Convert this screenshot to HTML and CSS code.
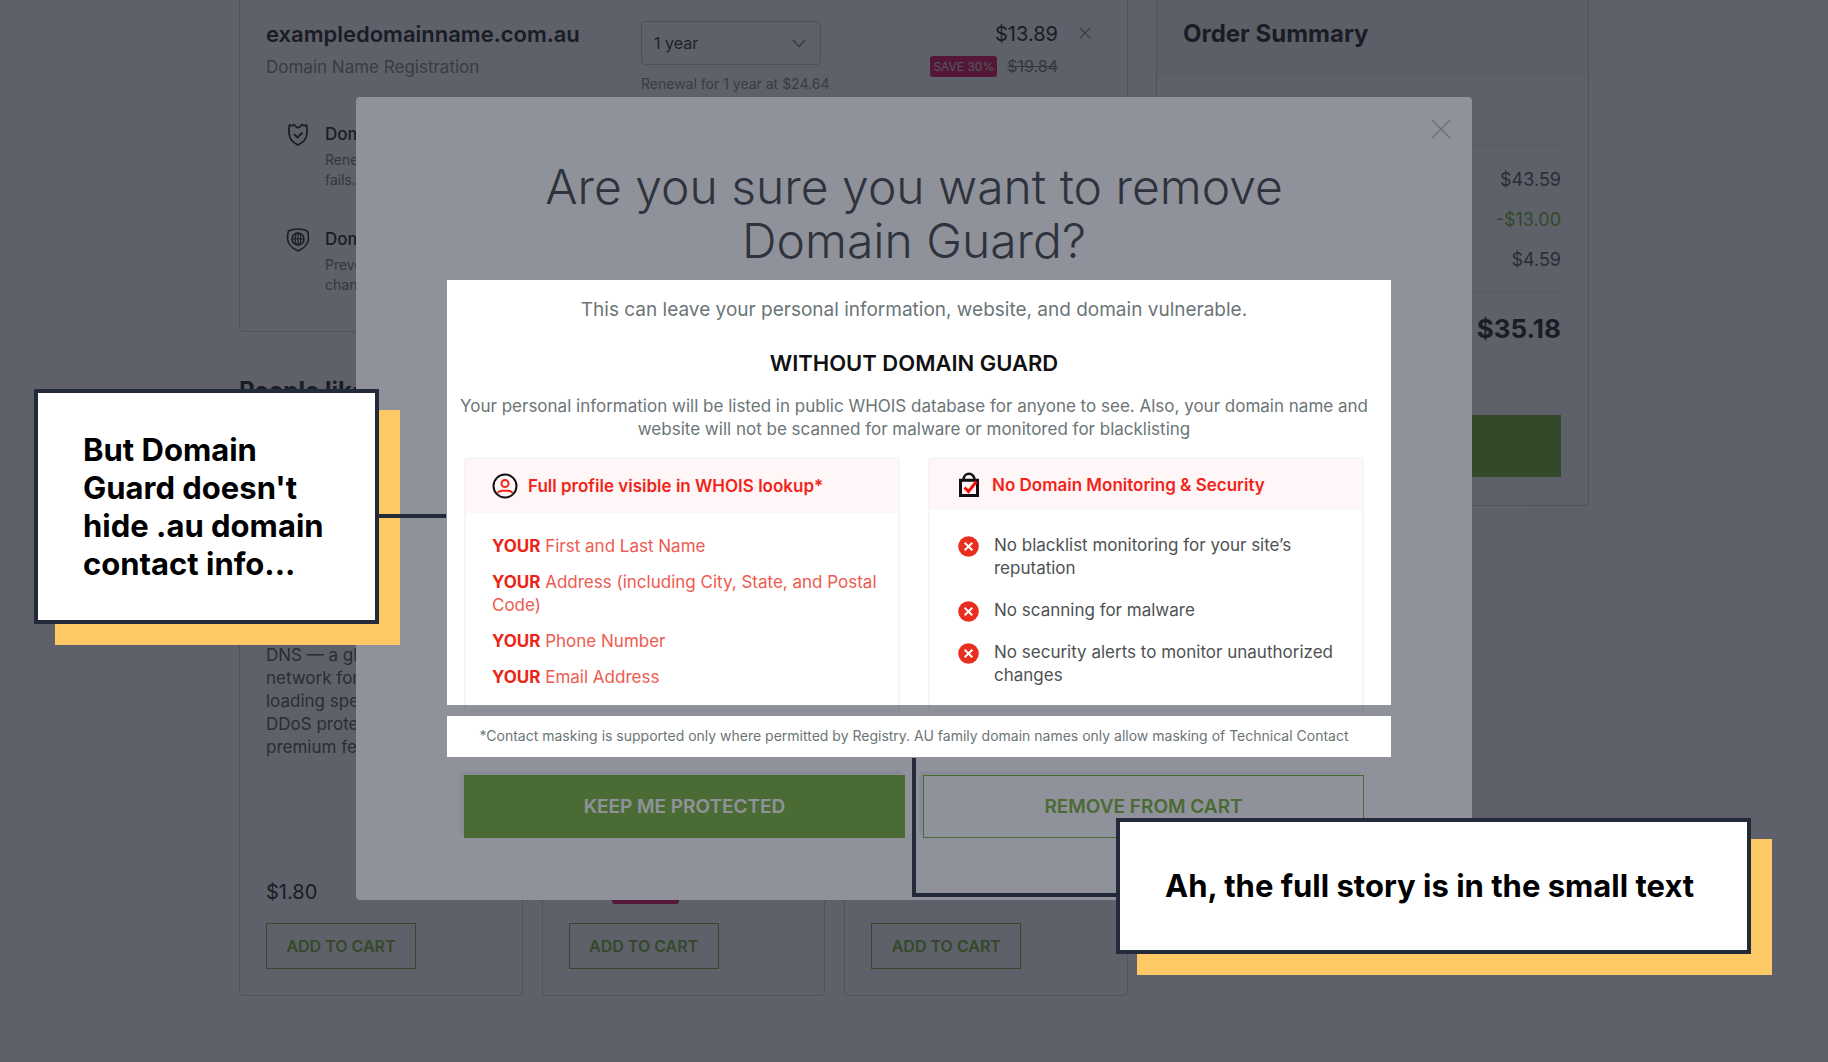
FILE: index.html
```html
<!DOCTYPE html>
<html lang="en">
<head>
    <meta charset="utf-8">
    <title>Cart</title>
    <link rel="stylesheet" href="styles.css">
</head>
<body>
    <div class="page">
        <main class="main">
            <section class="panel cart-item">
                <div class="item-row">
                    <div class="item-name">
                        <h2>exampledomainname.com.au</h2>
                        <p class="muted">Domain Name Registration</p>
                    </div>
                    <div class="item-term">
                        <div class="select-wrap">
                            <select class="term" aria-label="Registration term">
                                <option>1 year</option>
                            </select>
                            <svg class="chevron" width="14" height="9" viewBox="0 0 14 9"><path d="M1 1l6 6.5L13 1" fill="none" stroke="#777" stroke-width="1.3"/></svg>
                        </div>
                        <p class="renewal">Renewal for 1 year at $24.64</p>
                    </div>
                    <div class="item-price">
                        <span class="price">$13.89</span>
                        <div class="saving"><span class="badge">SAVE 30%</span><s>$19.84</s></div>
                    </div>
                    <button class="remove-item" aria-label="Remove item">
                        <svg width="12" height="12" viewBox="0 0 12 12"><path d="M1 1l10 10M11 1L1 11" fill="none" stroke="#888" stroke-width="1.2"/></svg>
                    </button>
                </div>
                <div class="addon">
                    <svg class="addon-icon" width="24" height="24" viewBox="0 0 24 24" fill="none" stroke="#222" stroke-width="1.8" stroke-linejoin="round" stroke-linecap="round">
                        <path d="M3.5 2c1.800 1 3.300.8 4.700-.4C9.500 3.800 10.700 4.600 12 4.600s2.500-.8 3.800-3c1.400 1.200 2.900 1.400 4.700.4.500 2 .700 5 .500 8-.3 5.500-3.500 9.500-9 12-5.500-2.500-8.700-6.500-9-12-.2-3 0-6 .5-8z"/>
                        <path d="M8.500 11.500l3 3 4.500-4.500"/>
                    </svg>
                    <div>
                        <h3>Domain Guard</h3>
                        <p>Renews<br>fails.</p>
                    </div>
                </div>
                <div class="addon">
                    <svg class="addon-icon" width="24" height="24" viewBox="0 0 24 24" fill="none" stroke="#222" stroke-width="1.6" stroke-linejoin="round">
                        <path d="M12 1c3.500 0 6.800.7 9.500 2 .9 2.500 1.200 5.500.9 8.500-.6 5-4.400 8.700-10.400 11.500C6 20.200 2.200 16.500 1.600 11.500 1.300 8.500 1.600 5.500 2.500 3 5.200 1.700 8.500 1 12 1z"/>
                        <circle cx="12" cy="11" r="6"/>
                        <ellipse cx="12" cy="11" rx="2.800" ry="6" stroke-width="1.200"/>
                        <path d="M6 11h12M12 5v12" stroke-width="1.200"/>
                    </svg>
                    <div>
                        <h3>Domain Lock</h3>
                        <p>Prevent<br>changes</p>
                    </div>
                </div>
            </section>

            <h2 class="upsell-title">People like</h2>
            <div class="upsell">
                <article class="panel product">
                    <p>DNS — a glo<br>network for<br>loading speed<br>DDoS protect<br>premium feat</p>
                    <div class="product-price">$1.80</div>
                    <button class="btn-outline">ADD TO CART</button>
                </article>
                <article class="panel product">
                    <div class="product-price"><span class="badge sale"></span></div>
                    <button class="btn-outline">ADD TO CART</button>
                </article>
                <article class="panel product">
                    <div class="product-price"></div>
                    <button class="btn-outline">ADD TO CART</button>
                </article>
            </div>
        </main>

        <aside class="panel summary">
            <h2>Order Summary</h2>
            <div class="summary-body">
                <ul class="totals">
                    <li>$43.59</li>
                    <li class="discount">-$13.00</li>
                    <li>$4.59</li>
                </ul>
                <div class="total">$35.18</div>
                <button class="checkout" aria-label="Checkout"></button>
            </div>
        </aside>
    </div>

    <div class="backdrop">
        <div class="modal" role="dialog" aria-labelledby="modal-title">
            <button class="close" aria-label="Close">
                <svg width="20" height="20" viewBox="0 0 20 20"><path d="M1 1l18 18M19 1L1 19" fill="none" stroke="#bbb" stroke-width="1.500"/></svg>
            </button>
            <h1 id="modal-title">Are you sure you want to remove<br>Domain Guard?</h1>

            <section class="spotlight warning">
                <p class="lead">This can leave your personal information, website, and domain vulnerable.</p>
                <h2>WITHOUT DOMAIN GUARD</h2>
                <p class="intro">Your personal information will be listed in public WHOIS database for anyone to see. Also, your domain name and website will not be scanned for malware or monitored for blacklisting</p>
                <div class="risks">
                    <div class="risk">
                        <h3>
                            <svg width="26" height="26" viewBox="0 0 26 26" fill="none" stroke-width="2">
                                <circle cx="13" cy="10.500" r="3.500" stroke="#f4261a"/>
                                <path d="M6 20.300c0-1.500 1.800-2.500 4.500-2.500h5c2.700 0 4.500 1 4.500 2.500" stroke="#f4261a"/>
                                <circle cx="13" cy="13" r="11.500" stroke="#111"/>
                            </svg>
                            Full profile visible in WHOIS lookup*
                        </h3>
                        <ul class="exposed">
                            <li><strong>YOUR</strong> First and Last Name</li>
                            <li><strong>YOUR</strong> Address (including City, State, and Postal Code)</li>
                            <li><strong>YOUR</strong> Phone Number</li>
                            <li><strong>YOUR</strong> Email Address</li>
                        </ul>
                    </div>
                    <div class="risk security">
                        <h3>
                            <svg width="22" height="26" viewBox="0 0 22 26" fill="none">
                                <path d="M2.500 8.200h17v15.300h-17z" stroke="#111" stroke-width="3"/>
                                <path d="M5.500 8c0-8.300 11-8.300 11 0" stroke="#111" stroke-width="2.600"/>
                                <path d="M6.500 15.500l4 4L18.500 9.500" stroke="#f4100a" stroke-width="3"/>
                            </svg>
                            No Domain Monitoring &amp; Security
                        </h3>
                        <ul class="missing">
                            <li><svg width="21" height="21" viewBox="0 0 21 21"><circle cx="10.500" cy="10.500" r="10.300" fill="#e92d1e"/><path d="M6.700 6.700l7.600 7.600M14.300 6.700l-7.600 7.600" stroke="#fff" stroke-width="2"/></svg><span>No blacklist monitoring for your site’s reputation</span></li>
                            <li><svg width="21" height="21" viewBox="0 0 21 21"><circle cx="10.500" cy="10.500" r="10.300" fill="#e92d1e"/><path d="M6.700 6.700l7.600 7.600M14.300 6.700l-7.600 7.600" stroke="#fff" stroke-width="2"/></svg><span>No scanning for malware</span></li>
                            <li><svg width="21" height="21" viewBox="0 0 21 21"><circle cx="10.500" cy="10.500" r="10.300" fill="#e92d1e"/><path d="M6.700 6.700l7.600 7.600M14.300 6.700l-7.600 7.600" stroke="#fff" stroke-width="2"/></svg><span>No security alerts to monitor unauthorized changes</span></li>
                        </ul>
                    </div>
                </div>
            </section>
            <div class="risk-ends"><div></div><div></div></div>
            <p class="spotlight footnote">*Contact masking is supported only where permitted by Registry. AU family domain names only allow masking of Technical Contact</p>

            <div class="actions">
                <button class="keep">KEEP ME PROTECTED</button>
                <button class="remove">REMOVE FROM CART</button>
            </div>
        </div>
    </div>

    <div class="dim"></div>
    <aside class="callout profile-note">But Domain Guard doesn't hide .au domain contact info...</aside>
    <aside class="callout footnote-note">Ah, the full story is in the small text</aside>
    <div class="connector profile-line"></div>
    <div class="connector footnote-line"></div>
</body>
</html>
```
FILE: styles.css
```css
* {
    box-sizing: border-box;
}

body {
    margin: 0;
    min-height: 100vh;
    position: relative;
    overflow: hidden;
    background: white;
    color: #222;
    font-family: Inter, sans-serif;
    font-size: 17px;
}

h1, h2, h3, p, ul {
    margin: 0;
    padding: 0;
}

ul {
    list-style: none;
}

button, select {
    font-family: inherit;
    cursor: pointer;
}

/* cart page */
.page {
    display: grid;
    grid-template-columns: 889fr 433fr;
    gap: 28px;
    align-items: start;
    max-width: 1350px;
    margin: 0 auto;
}

.panel {
    border: 1px solid #d4d4d4;
    border-radius: 4px;
}

.cart-item, .summary {
    border-top: none;
    border-radius: 0 0 4px 4px;
}

.cart-item {
    height: 332px;
    padding: 18px 36px 0 26px;
}

.item-row {
    display: flex;
    height: 78px;
}

.item-name {
    width: 375px;
}

.item-name h2 {
    font-size: 22px;
    font-weight: 600;
    line-height: 32px;
}

.muted {
    color: #888;
    line-height: 34px;
}

.item-term {
    padding-top: 3px;
}

.select-wrap {
    position: relative;
    width: 180px;
}

.term {
    width: 100%;
    height: 44px;
    padding: 0 12px;
    appearance: none;
    background: white;
    border: 1px solid #ccc;
    border-radius: 4px;
    color: #333;
    font-size: 16px;
}

.chevron {
    position: absolute;
    right: 15px;
    top: 18px;
}

.renewal {
    color: #888;
    font-size: 14px;
    line-height: 38px;
    white-space: nowrap;
}

.item-price {
    margin-left: auto;
    text-align: right;
}

.price {
    font-size: 20px;
    line-height: 32px;
}

.saving {
    display: flex;
    align-items: center;
    gap: 10px;
    height: 32px;
    color: #777;
    font-size: 16px;
}

.badge {
    background: #e3105c;
    border-radius: 3px;
    color: #ddd;
    font-size: 12px;
    line-height: 21px;
    padding: 0 3px;
}

.remove-item {
    align-self: flex-start;
    margin-left: 21px;
    padding: 0;
    border: none;
    background: none;
    line-height: 32px;
}

.addon {
    display: flex;
    gap: 15px;
    height: 105px;
    padding: 26px 0 0 20px;
}

.addon-icon {
    margin-top: 1px;
}

.addon h3 {
    font-size: 17px;
    font-weight: 500;
    line-height: 24px;
}

.addon p {
    padding-top: 4px;
    color: #777;
    font-size: 14px;
    line-height: 20px;
}

.upsell-title {
    margin: 45px 0 19px;
    font-size: 24px;
    line-height: 28px;
}

.upsell {
    display: grid;
    grid-template-columns: repeat(3, 1fr);
    gap: 19px;
}

.product {
    display: flex;
    flex-direction: column;
    align-items: flex-start;
    height: 572px;
    padding: 219px 26px 26px;
    color: #555;
    line-height: 23px;
    white-space: nowrap;
}

.product-price {
    margin-top: auto;
    height: 42px;
    color: #222;
    font-size: 20px;
}

.sale {
    display: block;
    width: 67px;
    height: 23px;
    margin-left: 43px;
}

.btn-outline {
    height: 46px;
    width: 150px;
    flex: none;
    padding: 0;
    background: white;
    border: 1px solid #75b131;
    color: #75b131;
    font-size: 16px;
    font-weight: 600;
}

.summary {
    height: 506px;
}

.summary h2 {
    height: 76px;
    padding: 18px 26px;
    background: #fafafa;
    font-size: 24px;
    line-height: 32px;
}

.summary-body {
    padding: 69px 27px 0 26px;
    text-align: right;
}

.totals {
    padding: 14px 0 11px;
    border-top: 1px solid #ebebeb;
    border-bottom: 1px solid #ebebeb;
    color: #555;
    font-size: 18px;
    line-height: 40px;
}

.discount {
    color: #75b131;
}

.total {
    padding-top: 19px;
    font-size: 26px;
    font-weight: 700;
    line-height: 36px;
}

.checkout {
    width: 100%;
    height: 62px;
    margin-top: 68px;
    background: #75b131;
    border: none;
}

/* confirmation dialog */
.backdrop {
    position: absolute;
    inset: 0;
    padding-top: 97px;
    background: rgba(0, 0, 0, 0.39);
}

.modal {
    position: relative;
    max-width: 1116px;
    margin: 0 auto;
    padding: 63px 108px 62px;
    background: white;
    border-radius: 4px;
    text-align: center;
}

.close {
    position: absolute;
    top: 22px;
    right: 21px;
    padding: 0;
    border: none;
    background: none;
}

.modal h1 {
    color: #3c4144;
    font-size: 48px;
    font-weight: 300;
    line-height: 54px;
}

.spotlight {
    position: relative;
    z-index: 2;
    margin: 0 -27px 0 -17px;
    padding: 0 27px 0 17px;
    background: white;
    color: #6b7577;
}

.warning {
    margin-top: 12px;
    padding-top: 18px;
}

.lead {
    font-size: 19px;
    line-height: 24px;
}

.warning h2 {
    margin: 26px 0 17px;
    color: #111;
    font-size: 22px;
    font-weight: 600;
    line-height: 30px;
}

.intro {
    margin: 0 -8px;
    font-size: 17px;
    line-height: 23px;
}

.risks, .risk-ends {
    display: grid;
    grid-template-columns: 1fr 1fr;
    gap: 28px;
    text-align: left;
}

.risks {
    margin-top: 16px;
}

.risk {
    height: 248px;
    border: 2px solid #f6f6f9;
    border-bottom: none;
    border-radius: 4px 4px 0 0;
}

.risk h3 {
    display: flex;
    align-items: center;
    gap: 10px;
    height: 54px;
    padding-left: 26px;
    background: #fff7f7;
    color: #f2241a;
    font-size: 17px;
    font-weight: 600;
}

.security h3 {
    height: 51px;
    gap: 12px;
    padding-left: 28px;
}

.exposed {
    display: grid;
    gap: 13px;
    padding: 22px 16px 22px 26px;
    color: #ee5a50;
    font-size: 17px;
    line-height: 23px;
}

.exposed strong {
    color: #ec2415;
}

.missing {
    display: grid;
    gap: 19px;
    padding: 24px 16px 24px 26px;
    color: #4d5254;
    font-size: 17px;
    line-height: 23px;
}

.missing li {
    display: flex;
    gap: 15px;
}

.missing svg {
    flex: none;
    margin: 2px 0 0 2px;
}

.risk-ends {
    height: 11px;
}

.risk-ends div {
    height: 7px;
    border: 2px solid #f4f4f8;
    border-top: none;
    border-radius: 0 0 4px 4px;
}

.footnote {
    padding-bottom: 1px;
    font-size: 14px;
    line-height: 40px;
}

.actions {
    display: grid;
    grid-template-columns: 1fr 1fr;
    gap: 18px;
    margin-top: 18px;
}

.actions button {
    height: 63px;
    border: 1px solid #75b131;
    box-shadow: -4px -4px 2px #efeff5;
    font-size: 19px;
    font-weight: 600;
}

.actions .keep {
    background: #75b131;
    color: white;
}

.actions .remove {
    background: white;
    color: #75b131;
}

/* notes drawn over the page */
.dim {
    position: absolute;
    inset: 0;
    z-index: 1;
    background: rgba(31, 37, 53, 0.5);
}

.callout {
    position: absolute;
    z-index: 3;
    padding: 45px;
    background: white;
    border: 4px solid #232a3a;
    box-shadow: 21px 21px 0 #fdc964;
    color: black;
    font-size: 31px;
    font-weight: 700;
    line-height: 38px;
}

.profile-note {
    left: calc(50% - 880px);
    top: 389px;
    width: 345px;
    padding: 38px 42px 37px 45px;
}

.footnote-note {
    left: calc(50% + 202px);
    top: 818px;
    padding-right: 53px;
    white-space: nowrap;
}

.connector {
    position: absolute;
    z-index: 4;
    border: 0 solid #232a3a;
}

.profile-line {
    left: calc(50% - 536px);
    top: 514px;
    width: 68px;
    border-top-width: 4px;
}

.footnote-line {
    left: calc(50% - 2px);
    top: 758px;
    width: 205px;
    height: 139px;
    border-left-width: 4px;
    border-bottom-width: 4px;
}
```
